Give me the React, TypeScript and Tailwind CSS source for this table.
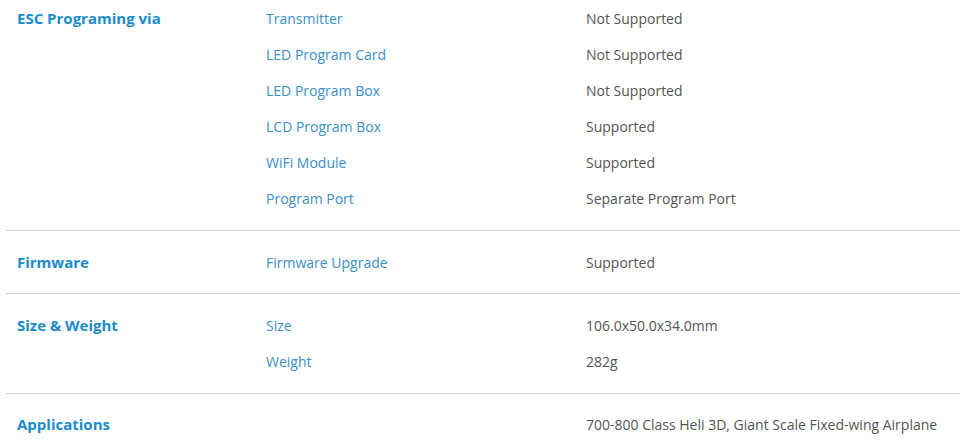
const sections = [
  {
    title: "ESC Programing via",
    pad: "pb-[14px]",
    rows: [
      ["Transmitter", "Not Supported"],
      ["LED Program Card", "Not Supported"],
      ["LED Program Box", "Not Supported"],
      ["LCD Program Box", "Supported"],
      ["WiFi Module", "Supported"],
      ["Program Port", "Separate Program Port"],
    ],
  },
  {
    title: "Firmware",
    pad: "border-t border-[#d4d4d4] pt-[13px] pb-[13px]",
    rows: [["Firmware Upgrade", "Supported"]],
  },
  {
    title: "Size & Weight",
    pad: "border-t border-[#d4d4d4] pt-[13px] pb-[14px]",
    rows: [
      ["Size", "106.0x50.0x34.0mm"],
      ["Weight", "282g"],
    ],
  },
  {
    title: "Applications",
    pad: "border-t border-[#d4d4d4] pt-[12px] pb-[14px]",
    rows: [["", "700-800 Class Heli 3D, Giant Scale Fixed-wing Airplane"]],
  },
]

export default function App() {
  return (
    <div className="w-[960px] h-[448px] overflow-hidden bg-white pl-[6px] font-['Open_Sans',sans-serif] text-[14px]">
      {sections.map((s) => (
        <div key={s.title} className={`flex ${s.pad}`}>
          <div className="w-[260px] shrink-0 pl-[11px] h-[36px] flex items-center font-bold text-[15px] text-[#1d8bcb]">
            {s.title}
          </div>
          <div className="flex-1">
            {s.rows.map(([k, v], j) => (
              <div key={j} className="flex h-[36px] items-center">
                <div className="w-[320px] shrink-0 text-[#3a90c8]">{k}</div>
                <div className="text-[#555555]">{v}</div>
              </div>
            ))}
          </div>
        </div>
      ))}
    </div>
  )
}
